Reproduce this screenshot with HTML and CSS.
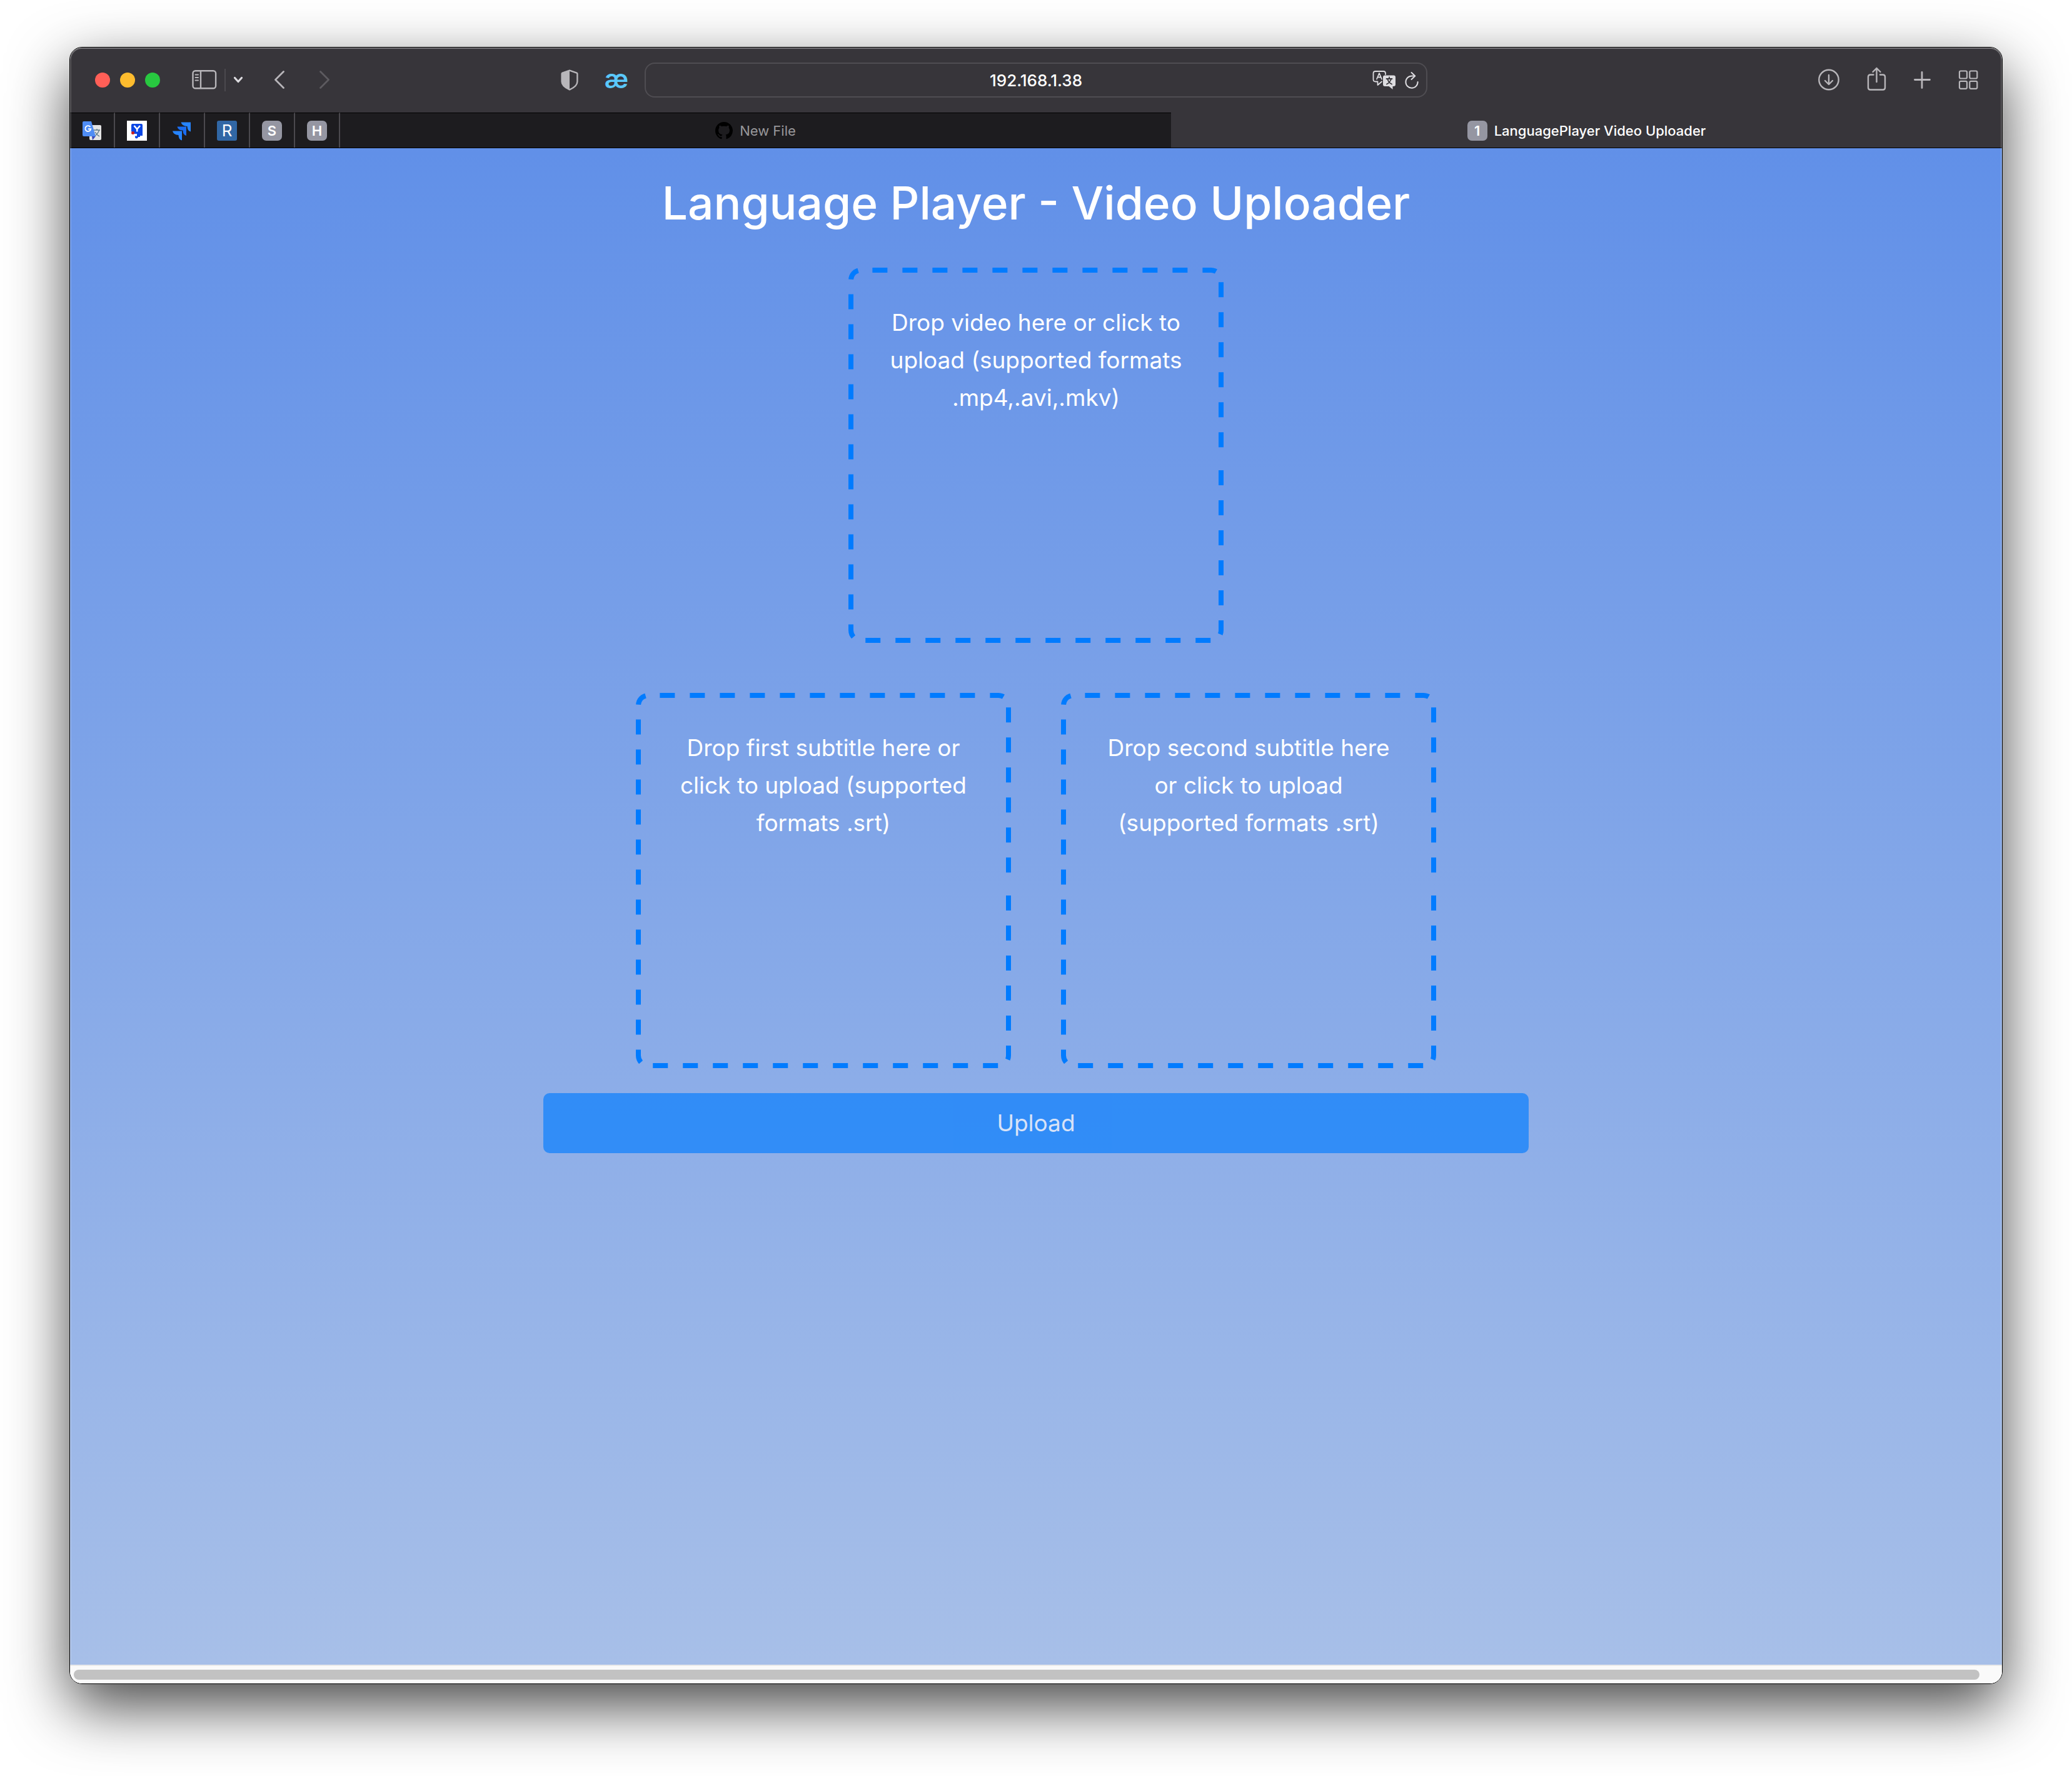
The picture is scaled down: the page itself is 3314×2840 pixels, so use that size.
FILE: index.html
```html
<!DOCTYPE html>
<html lang="en">
<head>
<meta charset="utf-8">
<title>LanguagePlayer Video Uploader</title>
<link rel="stylesheet" href="styles.css">
</head>
<body>
<div class="window">
  <header class="toolbar">
    <div class="toolbar-start">
      <div class="lights">
        <button class="light light-close" type="button" aria-label="Close"></button>
        <button class="light light-min" type="button" aria-label="Minimize"></button>
        <button class="light light-max" type="button" aria-label="Zoom"></button>
      </div>
      <div class="sidebar-group">
        <button class="icon-button" type="button" aria-label="Sidebar">
          <svg width="40" height="32" viewBox="0 0 40 32" fill="none" stroke="#b8b6ba" stroke-width="2.4" stroke-linecap="round"><rect x="1.500" y="1.200" width="36.600" height="28" rx="4"/><path d="M14 1.200V29"/><path d="M5.500 7.500h4.500M5.500 12h4.500M5.500 16.500h4.500" stroke-width="2"/></svg>
        </button>
        <span class="divider"></span>
        <button class="icon-button" type="button" aria-label="Tab groups">
          <svg width="16" height="12" viewBox="0 0 16 12" fill="none" stroke="#dddce0" stroke-width="3.200" stroke-linecap="round" stroke-linejoin="round"><path d="M2.500 2.500L8 8.500l5.500-6"/></svg>
        </button>
      </div>
      <div class="history">
        <button class="icon-button" type="button" aria-label="Back">
          <svg width="18" height="30" viewBox="0 0 18 30" fill="none" stroke="#b8b6ba" stroke-width="2.800" stroke-linecap="round" stroke-linejoin="round"><path d="M15.500 1.500L2.500 14.500l13 13"/></svg>
        </button>
        <button class="icon-button" type="button" aria-label="Forward">
          <svg width="18" height="30" viewBox="0 0 18 30" fill="none" stroke="#5d5b60" stroke-width="2.800" stroke-linecap="round" stroke-linejoin="round"><path d="M2.500 1.500l13 13-13 13"/></svg>
        </button>
      </div>
      <div class="extensions">
        <button class="icon-button" type="button" aria-label="Privacy report">
          <svg width="28" height="34" viewBox="0 0 28 34"><path d="M14 1.600L25.500 5.600Q26.400 6 26.400 7V19.500C26.400 26 19.500 30 14 32.400C8.500 30 1.600 26 1.600 19.500V7Q1.600 6 2.500 5.600Z" fill="none" stroke="#b8b6ba" stroke-width="2.400" stroke-linejoin="round"/><path d="M14 1.600V32.400C8.500 30 1.600 26 1.600 19.500V7Q1.600 6 2.500 5.600Z" fill="#b8b6ba"/></svg>
        </button>
        <button class="icon-button ae" type="button">æ</button>
      </div>
    </div>
    <div class="address">
      <input class="address-input" type="text" value="192.168.1.38" aria-label="Address">
      <div class="address-actions">
        <button class="icon-button" type="button" aria-label="Translate">
          <svg width="38" height="34" viewBox="0 0 38 34" fill="none" stroke="#dddce0" stroke-width="1.800" stroke-linecap="round" stroke-linejoin="round"><path d="M15 19.500L8.500 25v-5.500H5Q1.500 19.500 1.500 16V6.500Q1.500 3 5 3H17.500Q21 3 21 6.500V8"/><path d="M7 15.500L11 6l4 9.500M8.500 12.500h5"/><path d="M20 9.500H34Q37 9.500 37 12.500V24Q37 27 34 27H32.500V32L26.500 27H20Q17 27 17 24V12.500Q17 9.500 20 9.500Z" fill="#dddce0" stroke="none"/><path d="M22.500 15h9M27 12.500V15M30 15.500Q28 21 23 23.500M24.500 16Q26 21 31 23.500" stroke="#37353a"/></svg>
        </button>
        <button class="icon-button" type="button" aria-label="Reload">
          <svg width="22" height="28" viewBox="0 0 22 28" fill="none" stroke="#dddce0" stroke-width="2" stroke-linecap="round" stroke-linejoin="round"><path d="M16 7.500H11A9.600 9.600 0 1 0 20.600 17"/><path d="M10.500 2L16.200 7.500l-5.700 5.500"/></svg>
        </button>
      </div>
    </div>
    <div class="toolbar-end">
      <button class="icon-button" type="button" aria-label="Downloads">
        <svg width="36" height="36" viewBox="0 0 36 36" fill="none" stroke="#b8b6ba" stroke-width="2.400" stroke-linecap="round" stroke-linejoin="round"><circle cx="18" cy="17.500" r="15.700"/><path d="M18 10v14.500M12 19l6 6 6-6"/></svg>
      </button>
      <button class="icon-button" type="button" aria-label="Share">
        <svg width="32" height="42" viewBox="0 0 32 42" fill="none" stroke="#b8b6ba" stroke-width="2.400" stroke-linecap="round" stroke-linejoin="round"><path d="M10.500 12.500H5.500Q2 12.500 2 16V33Q2 36.500 5.500 36.500H25.500Q29 36.500 29 33V16Q29 12.500 25.500 12.500H21"/><path d="M15.500 24V2M9.500 8l6-6 6 6"/></svg>
      </button>
      <button class="icon-button" type="button" aria-label="New tab">
        <svg width="28" height="28" viewBox="0 0 28 28" fill="none" stroke="#b8b6ba" stroke-width="2.800" stroke-linecap="round"><path d="M13 1.500v25M1.500 13.500h24"/></svg>
      </button>
      <button class="icon-button" type="button" aria-label="Tab overview">
        <svg width="32" height="32" viewBox="0 0 32 32" fill="none" stroke="#b8b6ba" stroke-width="2.200"><rect x="2" y="1.500" width="12" height="12" rx="2"/><rect x="18.300" y="1.500" width="12" height="12" rx="2"/><rect x="2" y="17.800" width="12" height="12" rx="2"/><rect x="18.300" y="17.800" width="12" height="12" rx="2"/></svg>
      </button>
    </div>
  </header>

  <nav class="tabs">
    <a class="tab pinned" href="#" aria-label="Google Translate">
      <svg width="32" height="32" viewBox="0 0 32 32"><rect x="12" y="7" width="19" height="24" rx="2" fill="#e4e4e4"/><path d="M19 15h10M24 13v2M27.500 15.500Q25 22 19.500 25M21 18Q24 23 28 25" fill="none" stroke="#607d8b" stroke-width="1.400"/><path d="M16 25h6l-5 6z" fill="#3a4ab8"/><path d="M3 1H15L22 25H3Q1 25 1 23V3Q1 1 3 1Z" fill="#4f8df5"/><path d="M13.500 10A4.500 4.500 0 1 0 14.300 13.200H10" fill="none" stroke="#fff" stroke-width="1.900"/></svg>
    </a>
    <a class="tab pinned" href="#" aria-label="YouTrack">
      <svg width="32" height="32" viewBox="0 0 32 32"><path d="M0 0h32v32H0z" fill="#fff"/><path d="M9 5H23Q25 5 25 7V24H21V26H18Q17.500 28.500 15 28.500Q12.500 28 13 24.500H16V21H10L7 17V7Q7 5 9 5Z" fill="#0a46e4"/><path d="M11.500 8l4.700 5.500V17.500M21 8l-4.800 5.500" fill="none" stroke="#fff" stroke-width="2.600"/><circle cx="9.500" cy="19.500" r="2.500" fill="#c81e1e"/></svg>
    </a>
    <a class="tab pinned" href="#" aria-label="Jira">
      <svg width="32" height="32" viewBox="0 0 32 32"><path d="M14.500 2.500H30V17.500Q24.500 16.500 24.500 9Q16 9 14.500 2.500Z" fill="#2684ff"/><path d="M8.500 9.500H23V24Q17.500 23 17.500 15.500Q9.500 15.500 8.500 9.500Z" fill="#1a6cf0"/><path d="M1 16.500H16V31.500Q10.500 30 10.500 23Q2.500 23 1 16.500Z" fill="#2684ff"/></svg>
    </a>
    <a class="tab pinned" href="#"><span class="badge badge-blue">R</span></a>
    <a class="tab pinned" href="#"><span class="badge">S</span></a>
    <a class="tab pinned" href="#"><span class="badge">H</span></a>
    <a class="tab" href="#">
      <svg width="28" height="28" viewBox="0 0 16 16" fill="#000"><path d="M8 0C3.580 0 0 3.580 0 8c0 3.540 2.290 6.530 5.470 7.590.4.070.55-.17.55-.38 0-.19-.01-.82-.01-1.490-2.010.37-2.530-.49-2.690-.94-.09-.23-.48-.94-.82-1.130-.28-.15-.68-.52-.01-.53.63-.01 1.080.58 1.230.82.72 1.210 1.870.87 2.330.66.07-.52.28-.87.51-1.070-1.780-.2-3.640-.89-3.640-3.950 0-.87.31-1.590.82-2.150-.08-.2-.36-1.020.08-2.120 0 0 .67-.21 2.200.82.64-.18 1.320-.27 2-.27s1.360.09 2 .27c1.530-1.040 2.200-.82 2.200-.82.44 1.100.16 1.920.08 2.120.51.56.82 1.270.82 2.150 0 3.070-1.870 3.750-3.650 3.950.29.25.54.73.54 1.480 0 1.070-.01 1.930-.01 2.200 0 .21.15.46.55.38A8.010 8.010 0 0 0 16 8c0-4.420-3.580-8-8-8z"/></svg>
      <span>New File</span>
    </a>
    <a class="tab active" href="#"><span class="badge">1</span><span>LanguagePlayer Video Uploader</span></a>
  </nav>

  <main class="page">
    <h1 class="title">Language Player - Video Uploader</h1>
    <form class="uploader">
      <div class="row">
        <label class="drop">
          <svg class="drop-outline" viewBox="0 0 600 600"><use href="#dashes"/></svg>
          <input class="drop-input" type="file">
          <span class="drop-text">Drop video here or click to upload (supported formats .mp4,.avi,.mkv)</span>
        </label>
      </div>
      <div class="row">
        <label class="drop">
          <svg class="drop-outline" viewBox="0 0 600 600"><use href="#dashes"/></svg>
          <input class="drop-input" type="file">
          <span class="drop-text">Drop first subtitle here or click to upload (supported formats .srt)</span>
        </label>
        <label class="drop">
          <svg class="drop-outline" viewBox="0 0 600 600"><use href="#dashes"/></svg>
          <input class="drop-input" type="file">
          <span class="drop-text">Drop second subtitle here or click to upload (supported formats .srt)</span>
        </label>
      </div>
      <button class="upload" type="submit" disabled>Upload</button>
    </form>
  </main>
  <div class="scrollbar"><div class="thumb"></div></div>
</div>
<svg class="defs" width="0" height="0"><defs><path id="dashes" d="M600 300V580A20 20 0 0 1 580 600H20A20 20 0 0 1 0 580V20A20 20 0 0 1 20 0H580A20 20 0 0 1 600 20V300"/></defs></svg>
</body>
</html>
```
FILE: styles.css
```css
* { box-sizing: border-box; }

body {
  margin: 0;
  min-height: 100vh;
  padding: 75px 111px 147px;
  display: flex;
  flex-direction: column;
  background: #fff;
  font-family: Inter, "Liberation Sans", sans-serif;
  font-size: 22px;
  color: #fff;
}

.defs { position: absolute; }

.window {
  position: relative;
  flex: 1;
  display: flex;
  flex-direction: column;
  border: 1px solid #000;
  border-radius: 20px;
  box-shadow: 0 36px 96px rgba(0, 0, 0, 0.72);
  overflow: hidden;
}

/* light rim over the window contents */
.window::after {
  content: "";
  position: absolute;
  inset: 0;
  border-radius: 19px;
  box-shadow: inset 0 2px 0 rgba(255, 255, 255, 0.16), inset 0 0 0 2px rgba(255, 255, 255, 0.18);
  pointer-events: none;
}

.toolbar {
  display: grid;
  grid-template-columns: 1fr 1252px 1fr;
  align-items: center;
  height: 104px;
  background: #37353a;
}

.icon-button {
  display: flex;
  padding: 0;
  border: 0;
  background: none;
}

.toolbar-start {
  display: flex;
  align-items: center;
  padding: 0 26px 0 40px;
}

.lights { display: flex; gap: 16px; }

.light {
  width: 24px;
  height: 24px;
  padding: 0;
  border: 0;
  border-radius: 50%;
}
.light-close { background: #ff5f57; }
.light-min { background: #febc2e; }
.light-max { background: #28c840; }

.sidebar-group {
  display: flex;
  align-items: center;
  gap: 12px;
  margin-left: 51px;
}

.divider {
  width: 2px;
  height: 36px;
  background: #4b494e;
}

.history {
  display: flex;
  gap: 54px;
  margin-left: 49px;
}

.extensions {
  display: flex;
  align-items: center;
  gap: 42px;
  margin-left: auto;
}

.ae {
  font-family: inherit;
  font-size: 42px;
  line-height: 48px;
  height: 52px;
  font-weight: 600;
  color: #5ac8fa;
}

.address {
  display: grid;
  grid-template-columns: 76px 1fr 76px;
  align-items: center;
  height: 56px;
  padding: 0 12px;
  border: 2px solid #4f4d52;
  border-radius: 16px;
}

.address-input {
  grid-column: 2;
  min-width: 0;
  padding: 2px 0 0;
  border: 0;
  background: none;
  font-family: inherit;
  font-size: 26px;
  font-weight: 500;
  line-height: 32px;
  text-align: center;
  color: #fff;
}

.address-actions {
  display: flex;
  align-items: center;
  justify-content: flex-end;
  gap: 14px;
}

.toolbar-end {
  display: flex;
  align-items: center;
  justify-content: flex-end;
  gap: 43px;
  padding-right: 38px;
}

.tabs {
  display: flex;
  height: 57px;
  background: #1d1c1f;
  border-bottom: 1px solid #000;
}

.tab {
  flex: 1;
  display: flex;
  align-items: center;
  justify-content: center;
  gap: 11px;
  border-top: 1px solid #000;
  color: #98979a;
  text-decoration: none;
}

.pinned {
  flex: 0 0 72px;
  border-right: 2px solid #4b494e;
}

.active {
  border-top-color: #37353a;
  background: #37353a;
  color: #fff;
  font-weight: 500;
}

.badge {
  display: flex;
  align-items: center;
  justify-content: center;
  width: 32px;
  height: 32px;
  border-radius: 7px;
  background: #9596a2;
  color: #fff;
  font-weight: 600;
}
.badge-blue {
  border-radius: 3px;
  background: #3167a5;
  font-weight: 400;
  font-size: 26px;
}

.page {
  flex: 1;
  padding: 40px 0;
  background: linear-gradient(#6190e8, #a7bfe8);
}

.title {
  margin: 0 0 55px;
  font-size: 73px;
  font-weight: 500;
  line-height: 96px;
  text-align: center;
}

.uploader {
  display: flex;
  flex-direction: column;
  align-items: center;
  gap: 40px;
}

.row {
  display: flex;
  justify-content: center;
  gap: 80px;
}
.row + .row { margin-top: 40px; }

.drop {
  display: grid;
  width: 600px;
  height: 600px;
  border-radius: 20px;
  overflow: hidden;
}

.drop > * { grid-area: 1 / 1; }

.drop-outline {
  width: 100%;
  height: 100%;
  fill: none;
  stroke: #007bff;
  stroke-width: 16;
  stroke-dasharray: 24;
  stroke-dashoffset: 24;
}

.drop-input {
  width: 100%;
  opacity: 0;
}

.drop-text {
  padding: 58px 62px;
  font-size: 37px;
  line-height: 60px;
  text-align: center;
}

.upload {
  width: 51%;
  height: 96px;
  padding: 0 0 2px;
  border: 0;
  border-radius: 10px;
  background: #007bff;
  font-family: inherit;
  font-size: 37px;
  color: #fff;
  opacity: 0.65;
}

.scrollbar {
  height: 30px;
  padding: 6px 36px 6px 6px;
  border-top: 2px solid #e8e8e8;
  background: #fafafa;
}

.thumb {
  height: 16px;
  border-radius: 8px;
  background: #c2c2c2;
}
```
